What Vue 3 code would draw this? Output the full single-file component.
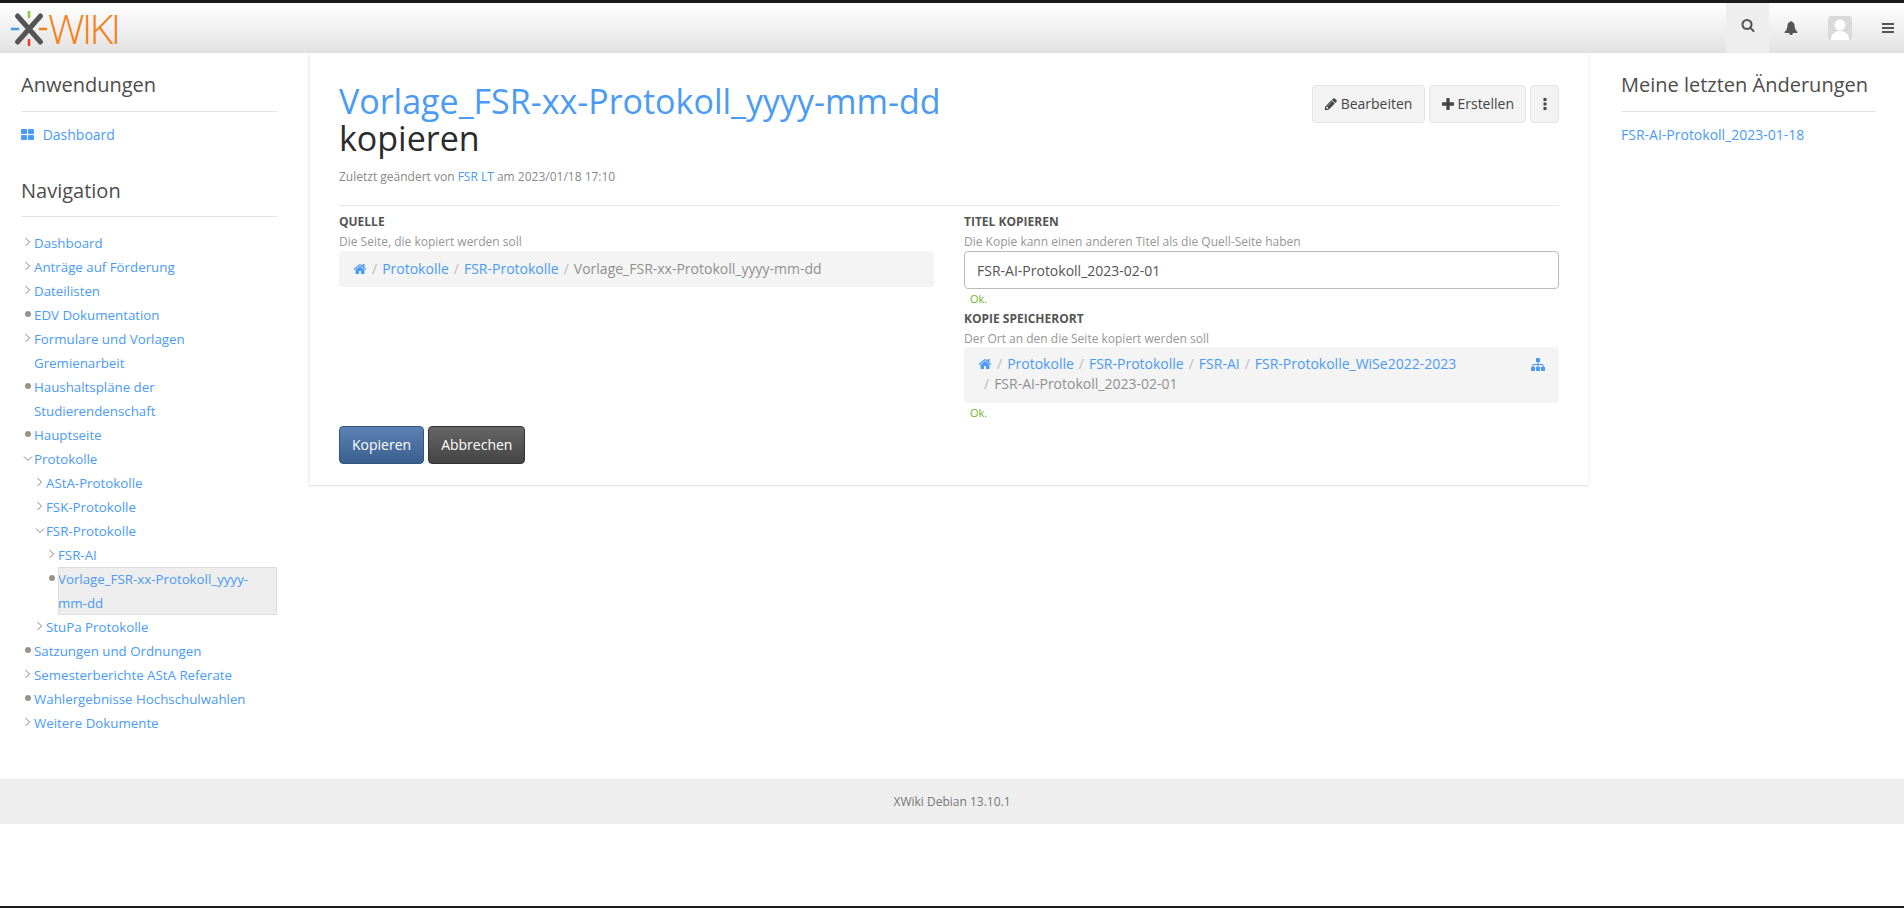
<script setup>
const home = 'M1472 992v480q0 26-19 45t-45 19h-384v-384h-256v384h-384q-26 0-45-19t-19-45v-480q0-1 .5-3t.5-3l575-474 575 474q1 2 1 6zm223-69l-62 74q-8 9-21 11h-3q-13 0-21-7l-692-577-692 577q-12 8-24 7-13-2-21-11l-62-74q-8-10-7-23.500t11-21.500l719-599q32-26 76-26t76 26l244 204v-195q0-14 9-23t23-9h192q14 0 23 9t9 23v408l219 182q10 8 11 21.500t-7 23.500z'
const search = 'M1216 832q0-185-131.500-316.500t-316.500-131.500-316.500 131.500-131.500 316.500 131.500 316.500 316.500 131.500 316.500-131.500 131.500-316.500zm512 832q0 52-38 90t-90 38q-54 0-90-38l-343-342q-179 124-399 124-143 0-273.500-55.500t-225-150-150-225-55.500-273.500 55.500-273.500 150-225 225-150 273.500-55.500 273.500 55.500 225 150 150 225 55.500 273.500q0 220-124 399l343 343q37 37 37 90z'
const bell = 'M912 1696q0-16-16-16-59 0-101.500-42.500t-42.500-101.500q0-16-16-16t-16 16q0 73 51.500 124.500t124.500 51.500q16 0 16-16zm816-288q0 52-38 90t-90 38h-448q0 106-75 181t-181 75-181-75-75-181h-448q-52 0-90-38t-38-90q190-161 287-397.500t97-498.500q0-165 96-262t264-117q-8-18-8-37 0-40 28-68t68-28 68 28 28 68q0 19-8 37 168 20 264 117t96 262q0 262 97 498.500t287 397.500z'
const pencil = 'M491 1536l91-91-235-235-91 91v107h128v128h107zm523-928q0-22-22-22-10 0-17 7l-542 542q-7 7-7 17 0 22 22 22 10 0 17-7l542-542q7-7 7-17zm-54-192l416 416-832 832h-416v-416zm683 96q0 53-37 90l-166 166-416-416 166-165q36-38 90-38 53 0 91 38l235 234q37 39 37 91z'
const plus = 'M1600 736v192q0 40-28 68t-68 28h-416v416q0 40-28 68t-68 28h-192q-40 0-68-28t-28-68v-416h-416q-40 0-68-28t-28-68v-192q0-40 28-68t68-28h416v-416q0-40 28-68t68-28h192q40 0 68 28t28 68v416h416q40 0 68 28t28 68z'
const sitemap = 'M1792 1248v320q0 40-28 68t-68 28h-320q-40 0-68-28t-28-68v-320q0-40 28-68t68-28h96v-192h-512v192h96q40 0 68 28t28 68v320q0 40-28 68t-68 28h-320q-40 0-68-28t-28-68v-320q0-40 28-68t68-28h96v-192h-512v192h96q40 0 68 28t28 68v320q0 40-28 68t-68 28h-320q-40 0-68-28t-28-68v-320q0-40 28-68t68-28h96v-192q0-52 38-90t90-38h512v-192h-96q-40 0-68-28t-28-68v-320q0-40 28-68t68-28h320q40 0 68 28t28 68v320q0 40-28 68t-68 28h-96v192h512q52 0 90 38t38 90v192h96q40 0 68 28t28 68z'

const tree = [
  { label: 'Dashboard', level: 0, kind: 'closed' },
  { label: 'Anträge auf Förderung', level: 0, kind: 'closed' },
  { label: 'Dateilisten', level: 0, kind: 'closed' },
  { label: 'EDV Dokumentation', level: 0, kind: 'leaf' },
  { label: 'Formulare und Vorlagen Gremienarbeit', level: 0, kind: 'closed' },
  { label: 'Haushaltspläne der Studierendenschaft', level: 0, kind: 'leaf' },
  { label: 'Hauptseite', level: 0, kind: 'leaf' },
  { label: 'Protokolle', level: 0, kind: 'open' },
  { label: 'AStA-Protokolle', level: 1, kind: 'closed' },
  { label: 'FSK-Protokolle', level: 1, kind: 'closed' },
  { label: 'FSR-Protokolle', level: 1, kind: 'open' },
  { label: 'FSR-AI', level: 2, kind: 'closed' },
  { label: 'Vorlage_FSR-xx-Protokoll_yyyy-mm-dd', level: 2, kind: 'leaf', active: true },
  { label: 'StuPa Protokolle', level: 1, kind: 'closed' },
  { label: 'Satzungen und Ordnungen', level: 0, kind: 'leaf' },
  { label: 'Semesterberichte AStA Referate', level: 0, kind: 'closed' },
  { label: 'Wahlergebnisse Hochschulwahlen', level: 0, kind: 'leaf' },
  { label: 'Weitere Dokumente', level: 0, kind: 'closed' }
]
</script>

<template>
  <div class="page">
    <header class="navbar">
      <a class="logo">
        <svg width="37" height="37" viewBox="0 0 37 37">
          <path d="M6.500 6 L29.500 32 M29.500 6 L6.500 32" stroke="#555" stroke-width="5" stroke-linecap="round" fill="none" />
          <path d="M18 1 V8" stroke="#8cc63f" stroke-width="2.500" />
          <path d="M18 29 V36" stroke="#ee3b24" stroke-width="2.500" />
          <path d="M0 19 H8" stroke="#3d9be9" stroke-width="2.500" />
          <path d="M28 19 H36" stroke="#f57f17" stroke-width="2.500" />
        </svg>
        <span class="logo-text">WIKI</span>
      </a>
      <div class="nav-tools">
        <div class="tool tool-search">
          <svg width="14" height="14" viewBox="0 0 1792 1792"><path :d="search" /></svg>
        </div>
        <div class="tool tool-bell">
          <svg width="14" height="14" viewBox="0 0 1792 1792"><path :d="bell" /></svg>
        </div>
        <div class="tool tool-user">
          <div class="avatar">
            <svg width="24" height="24" viewBox="0 0 24 24">
              <circle cx="12" cy="9" r="5.500" fill="#fff" />
              <path d="M3 24 C3 17 8 15 12 15 C16 15 21 17 21 24 Z" fill="#fff" />
            </svg>
          </div>
        </div>
        <div class="tool tool-menu">
          <svg width="12" height="10" viewBox="0 0 12 10">
            <rect y="0" width="12" height="2" />
            <rect y="4" width="12" height="2" />
            <rect y="8" width="12" height="2" />
          </svg>
        </div>
      </div>
    </header>

    <div class="columns">
      <aside class="side side-left">
        <h2 class="panel-title">Anwendungen</h2>
        <a class="app-link">
          <svg class="grid-icon" width="13" height="11" viewBox="0 0 13 11">
            <rect width="6" height="5" rx="1" />
            <rect x="7" width="6" height="5" rx="1" />
            <rect y="6" width="6" height="5" rx="1" />
            <rect x="7" y="6" width="6" height="5" rx="1" />
          </svg>
          Dashboard
        </a>

        <h2 class="panel-title nav-title">Navigation</h2>
        <ul class="tree">
          <li v-for="item in tree" :key="item.label" class="tree-row" :class="'lvl' + item.level">
            <span class="marker">
              <svg v-if="item.kind === 'closed'" width="7" height="10" viewBox="0 0 7 10">
                <path d="M1.500 1 L5.500 5 L1.500 9" fill="none" stroke="#8a8580" stroke-width="1" />
              </svg>
              <svg v-else-if="item.kind === 'open'" width="10" height="7" viewBox="0 0 10 7">
                <path d="M1 1.500 L5 5.500 L9 1.500" fill="none" stroke="#8a8580" stroke-width="1" />
              </svg>
              <i v-else class="dot"></i>
            </span>
            <a class="tree-link" :class="{ active: item.active }">{{ item.label }}</a>
          </li>
        </ul>
      </aside>

      <main class="card">
        <div class="doc-head">
          <div class="doc-title">
            <h1><a>Vorlage_FSR-xx-Protokoll_yyyy-mm-dd</a><br />kopieren</h1>
            <p class="meta">Zuletzt geändert von <a>FSR LT</a> am 2023/01/18 17:10</p>
          </div>
          <div class="actions">
            <button class="btn">
              <svg width="12" height="12" viewBox="128 128 1536 1536"><path :d="pencil" /></svg>
              Bearbeiten
            </button>
            <button class="btn btn-plus">
              <svg width="12" height="12" viewBox="192 128 1408 1408"><path :d="plus" /></svg>
              Erstellen
            </button>
            <button class="btn btn-more">
              <svg width="4" height="12" viewBox="0 0 4 12">
                <rect x="0.500" width="3" height="3" />
                <rect x="0.500" y="4.500" width="3" height="3" />
                <rect x="0.500" y="9" width="3" height="3" />
              </svg>
            </button>
          </div>
        </div>

        <hr class="divider" />

        <div class="form-cols">
          <section class="form-col">
            <label class="f-label">Quelle</label>
            <p class="f-hint">Die Seite, die kopiert werden soll</p>
            <div class="crumbs">
              <div class="crumb-line">
                <svg class="home" width="14" height="14" viewBox="0 0 1792 1792"><path :d="home" /></svg>
                <i class="sep">/</i><a>Protokolle</a>
                <i class="sep">/</i><a>FSR-Protokolle</a>
                <i class="sep">/</i><span class="current">Vorlage_FSR-xx-Protokoll_yyyy-mm-dd</span>
              </div>
            </div>
          </section>

          <section class="form-col">
            <label class="f-label">Titel kopieren</label>
            <p class="f-hint">Die Kopie kann einen anderen Titel als die Quell-Seite haben</p>
            <input class="f-input" value="FSR-AI-Protokoll_2023-02-01" />
            <p class="f-ok">Ok.</p>
            <label class="f-label">Kopie Speicherort</label>
            <p class="f-hint">Der Ort an den die Seite kopiert werden soll</p>
            <div class="crumbs crumbs-target">
              <div class="crumb-line">
                <svg class="home" width="14" height="14" viewBox="0 0 1792 1792"><path :d="home" /></svg>
                <i class="sep">/</i><a>Protokolle</a>
                <i class="sep">/</i><a>FSR-Protokolle</a>
                <i class="sep">/</i><a>FSR-AI</a>
                <i class="sep">/</i><a>FSR-Protokolle_WiSe2022-2023</a>
              </div>
              <div class="crumb-line crumb-second">
                <i class="sep">/</i><span class="current">FSR-AI-Protokoll_2023-02-01</span>
              </div>
              <svg class="tree-pick" width="14" height="13" viewBox="0 128 1792 1536" preserveAspectRatio="none"><path :d="sitemap" /></svg>
            </div>
            <p class="f-ok">Ok.</p>
          </section>
        </div>

        <div class="form-buttons">
          <button class="primary">Kopieren</button>
          <button class="cancel">Abbrechen</button>
        </div>
      </main>

      <aside class="side side-right">
        <h2 class="panel-title">Meine letzten Änderungen</h2>
        <a class="app-link recent">FSR-AI-Protokoll_2023-01-18</a>
      </aside>
    </div>

    <footer class="footer">XWiki Debian 13.10.1</footer>
  </div>
</template>

<style>
html, body {
  margin: 0;
  background: #fff;
}
</style>

<style scoped>
.page {
  height: 908px;
  overflow: hidden;
  position: relative;
  font-family: "Open Sans", sans-serif;
  font-size: 14px;
  line-height: 24px;
  color: #4d4d4d;
  border-bottom: 2px solid #1c1c1c;
  box-sizing: border-box;
}
a {
  color: #4a9bf5;
  text-decoration: none;
}

/* barre du haut */
.navbar {
  height: 53px;
  box-sizing: border-box;
  border-top: 3px solid #1c1c1c;
  background: linear-gradient(to bottom, #fff 0, #e2e2e2 100%);
  display: flex;
  justify-content: space-between;
}
.logo {
  display: flex;
  align-items: center;
  padding-left: 11px;
  height: 50px;
}
.logo-text {
  font-weight: 350;
  font-size: 41px;
  line-height: 50px;
  letter-spacing: -2.700px;
  color: #f57f17;
}
.nav-tools {
  display: flex;
  align-items: stretch;
}
.tool {
  display: flex;
  align-items: center;
  justify-content: center;
}
.tool svg {
  fill: #555;
}
.tool-search {
  width: 43px;
  background: #eee;
  padding-bottom: 6px;
  box-sizing: border-box;
}
.tool-bell {
  width: 43px;
}
.tool-user {
  width: 56px;
}
.avatar {
  width: 24px;
  height: 24px;
  border-radius: 3px;
  background: #d9d9d9;
  overflow: hidden;
}
.avatar svg {
  display: block;
}
.tool-menu {
  width: 36px;
  box-sizing: border-box;
  padding-left: 4px;
}

.columns {
  display: flex;
  height: 726px;
}

/* colonnes laterales */
.side-left {
  width: 309px;
  box-sizing: border-box;
  padding: 15px 32px 0 21px;
}
.side-right {
  width: 315px;
  box-sizing: border-box;
  padding: 15px 28px 0 32px;
}
.panel-title {
  margin: 0 0 11px;
  padding-bottom: 9px;
  font-size: 20px;
  font-weight: 400;
  line-height: 34px;
  border-bottom: 1px solid #e3e3e3;
}
.nav-title {
  margin-top: 27px;
  margin-bottom: 14px;
  padding-bottom: 8px;
}
.app-link {
  display: block;
  line-height: 24px;
}
.grid-icon {
  fill: #4a9bf5;
  margin-right: 5px;
}
.tree {
  list-style: none;
  margin: 0;
  padding: 0;
}
.tree-row {
  display: flex;
  align-items: flex-start;
  font-size: 13.300px;
}
.lvl1 {
  padding-left: 12px;
}
.lvl2 {
  padding-left: 24px;
}
.marker {
  width: 13px;
  height: 24px;
  flex: none;
  display: flex;
  align-items: center;
  justify-content: center;
  padding-bottom: 2px;
  box-sizing: border-box;
}
.dot {
  width: 6px;
  height: 6px;
  border-radius: 50%;
  background: #9a938c;
}
.tree-link {
  flex: 1;
  padding-right: 3px;
}
.tree-link.active {
  background: #eee;
  outline: 1px solid #ddd;
  outline-offset: -1px;
}

/* contenu */
.card {
  width: 1280px;
  height: 432px;
  box-sizing: border-box;
  padding: 28px 30px 0 29px;
  background: #fff;
  box-shadow: 0 1px 2px rgba(0, 0, 0, 0.14);
  border-left: 1px solid #f2f2f2;
}
.doc-head {
  display: flex;
  justify-content: space-between;
}
h1 {
  margin: 0;
  padding-top: 2px;
  font-size: 34px;
  font-weight: 400;
  line-height: 37px;
  color: #2b2b2b;
}
.meta {
  margin: 11px 0 0;
  font-size: 12px;
  line-height: 18px;
  color: #888;
}
.actions {
  display: flex;
  gap: 4px;
  padding-top: 4px;
  height: 38px;
}
.btn {
  height: 38px;
  padding: 0 12px;
  font: 14px/24px "Open Sans", sans-serif;
  color: #444;
  background: #f3f3f3;
  border: 1px solid #e3e3e3;
  border-radius: 4px;
  display: flex;
  align-items: center;
  gap: 4px;
}
.btn svg {
  fill: #444;
}
.btn-plus {
  gap: 3px;
  padding: 0 11px 0 12px;
}
.btn-more {
  width: 29px;
  padding: 0;
  justify-content: center;
}
.divider {
  border: 0;
  border-top: 1px solid #e6e6e6;
  margin: 19px 0 0;
}
.form-cols {
  display: flex;
  gap: 30px;
  padding-top: 7px;
  height: 213px;
}
.form-col {
  flex: 1;
  min-width: 0;
}
.f-label {
  display: block;
  font-size: 12px;
  font-weight: 700;
  line-height: 18px;
  text-transform: uppercase;
  color: #555;
}
.f-hint {
  margin: 2px 0 0;
  font-size: 12px;
  line-height: 18px;
  color: #969696;
}
.crumbs {
  position: relative;
  background: #f4f4f4;
  border-radius: 4px;
  padding: 6px 14px;
}
.crumb-line {
  display: flex;
  align-items: center;
  white-space: nowrap;
}
.crumb-second {
  padding-left: 1px;
}
.home {
  fill: #4a9bf5;
}
.sep {
  font-style: normal;
  color: #bbb;
  padding: 0 5px;
}
.current {
  color: #909090;
}
.crumbs-target {
  margin-top: -1px;
  padding: 7px 14px 9px;
  line-height: 20px;
}
.tree-pick {
  position: absolute;
  right: 14px;
  top: 11px;
  fill: #4a9bf5;
}
.f-input {
  display: block;
  width: 100%;
  height: 38px;
  box-sizing: border-box;
  padding: 0 12px;
  font: 14px "Open Sans", sans-serif;
  color: #555;
  background: #fff;
  border: 1px solid #bbb;
  border-radius: 4px;
  outline: none;
}
.f-ok {
  margin: 1px 0 2px 6px;
  font-size: 11px;
  line-height: 18px;
  color: #6cb52d;
}
.form-buttons {
  display: flex;
  gap: 4px;
}
.form-buttons button {
  height: 38px;
  font: 14px/24px "Open Sans", sans-serif;
  color: #fff;
  border-radius: 4px;
  padding: 0 12px;
}
.primary {
  background: linear-gradient(to bottom, #5c82b3, #3a5f8f);
  border: 1px solid #34557f;
}
.cancel {
  background: linear-gradient(to bottom, #666, #444);
  border: 1px solid #333;
}

.footer {
  height: 45px;
  background: #eee;
  text-align: center;
  font-size: 12px;
  line-height: 45px;
  color: #777;
}
</style>
